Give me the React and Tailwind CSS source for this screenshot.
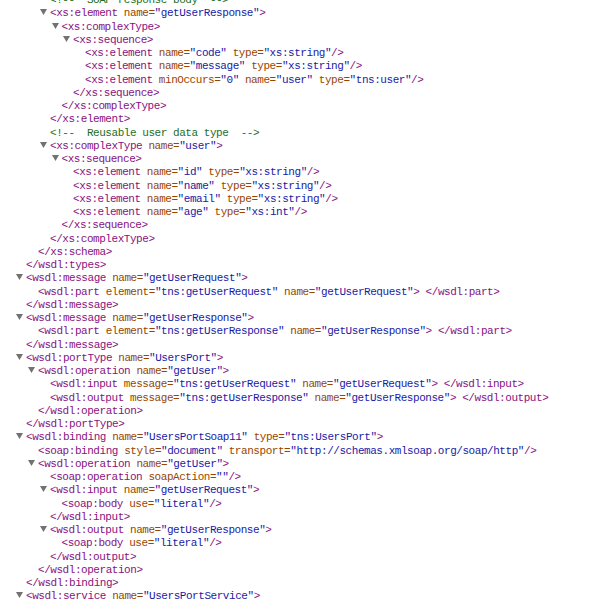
const indent = {
  1: "pl-[26px]",
  2: "pl-[38px]",
  3: "pl-[50px]",
  4: "pl-[61.5px]",
  5: "pl-[73px]",
  6: "pl-[85px]",
};

const colors = {
  t: "text-[#881280]",
  a: "text-[#994500]",
  v: "text-[#1a1aa6]",
  c: "text-[#236e25]",
  x: "",
};

function open(name, attrs = [], end = ">") {
  const parts = [["t", "<" + name]];
  attrs.forEach(([k, v]) => {
    parts.push(["x", " "], ["a", k + "="], ["v", '"' + v + '"']);
  });
  parts.push(["t", end]);
  return parts;
}

const close = (name) => [["t", "</" + name + ">"]];
const comment = (text) => [["c", "<!--  " + text + "  -->"]];
const pair = (name, attrs) => [...open(name, attrs), ["x", " "], ...close(name)];

const lines = [
  { d: 3, p: comment("SOAP response body") },
  { d: 3, t: 1, p: open("xs:element", [["name", "getUserResponse"]]) },
  { d: 4, t: 1, p: open("xs:complexType") },
  { d: 5, t: 1, p: open("xs:sequence") },
  { d: 6, p: open("xs:element", [["name", "code"], ["type", "xs:string"]], "/>") },
  { d: 6, p: open("xs:element", [["name", "message"], ["type", "xs:string"]], "/>") },
  { d: 6, p: open("xs:element", [["minOccurs", "0"], ["name", "user"], ["type", "tns:user"]], "/>") },
  { d: 5, p: close("xs:sequence") },
  { d: 4, p: close("xs:complexType") },
  { d: 3, p: close("xs:element") },
  { d: 3, p: comment("Reusable user data type") },
  { d: 3, t: 1, p: open("xs:complexType", [["name", "user"]]) },
  { d: 4, t: 1, p: open("xs:sequence") },
  { d: 5, p: open("xs:element", [["name", "id"], ["type", "xs:string"]], "/>") },
  { d: 5, p: open("xs:element", [["name", "name"], ["type", "xs:string"]], "/>") },
  { d: 5, p: open("xs:element", [["name", "email"], ["type", "xs:string"]], "/>") },
  { d: 5, p: open("xs:element", [["name", "age"], ["type", "xs:int"]], "/>") },
  { d: 4, p: close("xs:sequence") },
  { d: 3, p: close("xs:complexType") },
  { d: 2, p: close("xs:schema") },
  { d: 1, p: close("wsdl:types") },
  { d: 1, t: 1, p: open("wsdl:message", [["name", "getUserRequest"]]) },
  { d: 2, p: pair("wsdl:part", [["element", "tns:getUserRequest"], ["name", "getUserRequest"]]) },
  { d: 1, p: close("wsdl:message") },
  { d: 1, t: 1, p: open("wsdl:message", [["name", "getUserResponse"]]) },
  { d: 2, p: pair("wsdl:part", [["element", "tns:getUserResponse"], ["name", "getUserResponse"]]) },
  { d: 1, p: close("wsdl:message") },
  { d: 1, t: 1, p: open("wsdl:portType", [["name", "UsersPort"]]) },
  { d: 2, t: 1, p: open("wsdl:operation", [["name", "getUser"]]) },
  { d: 3, p: pair("wsdl:input", [["message", "tns:getUserRequest"], ["name", "getUserRequest"]]) },
  { d: 3, p: pair("wsdl:output", [["message", "tns:getUserResponse"], ["name", "getUserResponse"]]) },
  { d: 2, p: close("wsdl:operation") },
  { d: 1, p: close("wsdl:portType") },
  { d: 1, t: 1, p: open("wsdl:binding", [["name", "UsersPortSoap11"], ["type", "tns:UsersPort"]]) },
  { d: 2, p: open("soap:binding", [["style", "document"], ["transport", "http://schemas.xmlsoap.org/soap/http"]], "/>") },
  { d: 2, t: 1, p: open("wsdl:operation", [["name", "getUser"]]) },
  { d: 3, p: open("soap:operation", [["soapAction", ""]], "/>") },
  { d: 3, t: 1, p: open("wsdl:input", [["name", "getUserRequest"]]) },
  { d: 4, p: open("soap:body", [["use", "literal"]], "/>") },
  { d: 3, p: close("wsdl:input") },
  { d: 3, t: 1, p: open("wsdl:output", [["name", "getUserResponse"]]) },
  { d: 4, p: open("soap:body", [["use", "literal"]], "/>") },
  { d: 3, p: close("wsdl:output") },
  { d: 2, p: close("wsdl:operation") },
  { d: 1, p: close("wsdl:binding") },
  { d: 1, t: 1, p: open("wsdl:service", [["name", "UsersPortService"]]) },
];

function Toggle() {
  return (
    <svg className="inline-block -ml-[10px] mr-[3px] h-[6px] w-[7px] align-[1px]" viewBox="0 0 7 6">
      <polygon points="0,0 7,0 3.5,6" fill="#727272" />
    </svg>
  );
}

export default function App() {
  return (
    <div className="h-[600px] w-[615px] overflow-hidden bg-white">
      <div className="-mt-[6px] font-['Liberation_Mono',monospace] text-[11px] leading-[13.25px] tracking-[-0.45px] whitespace-pre">
        {lines.map((line, i) => (
          <div key={i} className={indent[line.d]}>
            {line.t ? <Toggle /> : null}
            {line.p.map(([k, text], j) => (
              <span key={j} className={colors[k]}>{text}</span>
            ))}
          </div>
        ))}
      </div>
    </div>
  );
}
